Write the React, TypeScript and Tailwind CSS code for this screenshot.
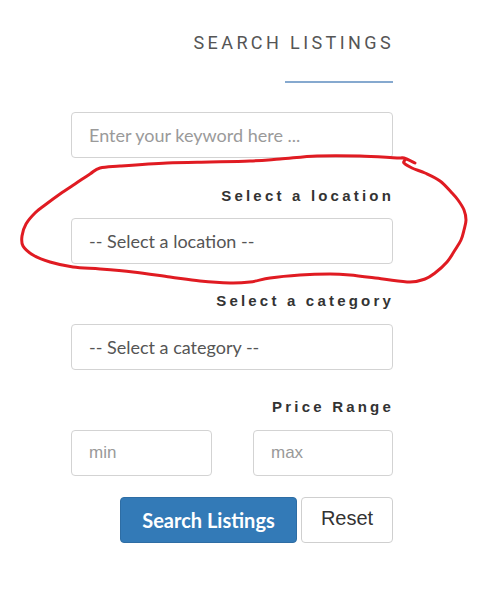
import React from "react";

const pts: [number, number][] = [
  [415, 163], [404, 158], [397, 158], [360, 156], [317, 156], [280, 159], [250, 161], [210, 162], [167, 163], [120, 166], [100, 168], [90, 174],
  [75, 184], [60, 194], [45, 205], [35, 213], [26, 224], [22, 236], [23, 246], [33, 255], [50, 262], [73, 267],
  [100, 269], [133, 272], [170, 277], [200, 281], [230, 283], [250, 282], [270, 278], [300, 275], [330, 274], [350, 275],
  [383, 279], [410, 282], [425, 279], [435, 273], [447, 262], [455, 250], [461, 240], [464, 230], [466, 220], [464, 210],
  [458, 200], [452, 193], [440, 181], [425, 173], [412, 168], [404, 163], [405, 160]
];

function smooth(p: [number, number][]) {
  let d = `M${p[0][0]},${p[0][1]}`;
  for (let i = 0; i < p.length - 1; i++) {
    const p0 = p[i - 1] || p[i];
    const p1 = p[i];
    const p2 = p[i + 1];
    const p3 = p[i + 2] || p2;
    const c1x = p1[0] + (p2[0] - p0[0]) / 6;
    const c1y = p1[1] + (p2[1] - p0[1]) / 6;
    const c2x = p2[0] - (p3[0] - p1[0]) / 6;
    const c2y = p2[1] - (p3[1] - p1[1]) / 6;
    d += ` C${c1x.toFixed(1)},${c1y.toFixed(1)} ${c2x.toFixed(1)},${c2y.toFixed(1)} ${p2[0]},${p2[1]}`;
  }
  return d;
}

const label =
  "h-[20px] text-right text-[15px] leading-[20px] font-bold tracking-[3.2px] mr-[-1px] text-[#333] font-['Liberation_Sans',Arial,sans-serif]";
const field =
  "h-[46px] border border-[#d3d3d3] rounded-[4px] flex items-center pl-[17px] text-[18px] font-['Lato','Open_Sans',sans-serif]";
const small =
  "h-[46px] border border-[#d3d3d3] rounded-[4px] flex items-center pl-[17px] text-[17px] text-[#999] font-['Liberation_Sans',Arial,sans-serif]";

export default function App() {
  return (
    <div className="relative w-[500px] h-[593px] bg-white overflow-hidden">
      <div className="ml-[71px] w-[322px] pt-[33px] flex flex-col">
        <div className="h-[20px] text-right text-[18px] leading-[20px] tracking-[3.4px] mr-[-1px] text-[#555] font-['Roboto','Liberation_Sans',sans-serif]">
          SEARCH LISTINGS
        </div>
        <div className="self-end mt-[28px] h-[2px] w-[108px] bg-[#86a9cf]" />

        <div className={`mt-[29px] text-[#9a9a9a] ${field}`}>Enter your keyword here ...</div>

        <div className={`mt-[28px] ${label}`}>Select a location</div>
        <div className={`mt-[12px] pl-[16px] text-[#555] ${field}`}>-- Select a location --</div>

        <div className={`mt-[27px] ${label}`}>Select a category</div>
        <div className={`mt-[13px] pl-[16px] text-[#555] ${field}`}>-- Select a category --</div>

        <div className={`mt-[27px] ${label}`}>Price Range</div>
        <div className="mt-[13px] flex justify-between">
          <div className={`w-[141px] ${small}`}>min</div>
          <div className={`w-[140px] ${small}`}>max</div>
        </div>

        <div className="mt-[21px] flex justify-end gap-[4px]">
          <div className="w-[177px] h-[46px] rounded-[4px] bg-[#337ab7] border border-[#2e6da4] flex items-center justify-center text-white text-[20px] font-bold font-['Lato','Open_Sans',sans-serif]">
            Search Listings
          </div>
          <div className="w-[92px] h-[46px] rounded-[4px] bg-white border border-[#cfcfcf] flex items-center justify-center text-[#333] text-[20px] pb-[4px] font-['Liberation_Sans',Arial,sans-serif]">
            Reset
          </div>
        </div>
      </div>

      <svg className="absolute left-0 top-0 pointer-events-none" width="500" height="593" viewBox="0 0 500 593">
        <path d={smooth(pts)} fill="none" stroke="#e01b22" strokeWidth="3" strokeLinecap="round" strokeLinejoin="round" />
      </svg>
    </div>
  );
}
